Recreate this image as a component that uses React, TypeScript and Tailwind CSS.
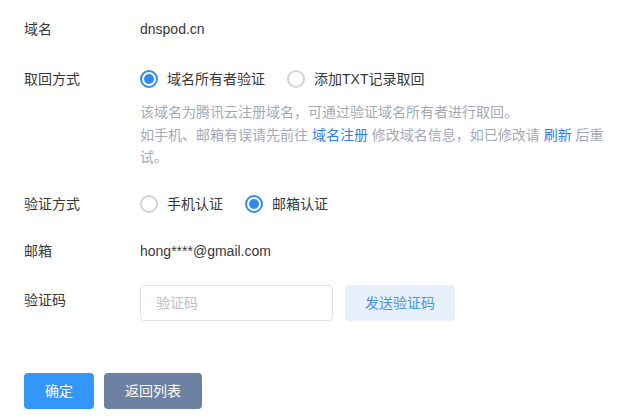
import { useState } from "react";

function Radio({ checked, label, onClick }: { checked: boolean; label: string; onClick: () => void }) {
  return (
    <button type="button" onClick={onClick} className="flex items-center mr-[22px] cursor-pointer">
      <span
        className={`w-[18px] h-[18px] rounded-full border-2 flex items-center justify-center ${
          checked ? "border-[#2f8af5]" : "border-[#d0d4db]"
        }`}
      >
        {checked && <span className="w-[10px] h-[10px] rounded-full bg-[#2f8af5]" />}
      </span>
      <span className="ml-[9px] text-[#383838]">{label}</span>
    </button>
  );
}

export default function App() {
  const [recover, setRecover] = useState("owner");
  const [verify, setVerify] = useState("email");

  return (
    <div
      className="w-[631px] h-[418px] bg-white pl-[24px] pt-[18px] text-[14px] leading-[22px] text-[#383838]"
      style={{ fontFamily: '"Liberation Sans", "Noto Sans CJK SC", sans-serif' }}
    >
      <div className="flex">
        <div className="w-[116px] shrink-0">域名</div>
        <div>dnspod.cn</div>
      </div>

      <div className="flex mt-[28px]">
        <div className="w-[116px] shrink-0">取回方式</div>
        <div className="w-[471px]">
          <div className="flex">
            <Radio checked={recover === "owner"} label="域名所有者验证" onClick={() => setRecover("owner")} />
            <Radio checked={recover === "txt"} label="添加TXT记录取回" onClick={() => setRecover("txt")} />
          </div>
          <p className="mt-[11px] text-[#a3a9b5] leading-[22.5px]">
            该域名为腾讯云注册域名，可通过验证域名所有者进行取回。
            <br />
            如手机、邮箱有误请先前往 <a className="text-[#2d7ff9]">域名注册</a> 修改域名信息，如已修改请{" "}
            <a className="text-[#2d7ff9]">刷新</a> 后重试。
          </p>
        </div>
      </div>

      <div className="flex mt-[24px]">
        <div className="w-[116px] shrink-0">验证方式</div>
        <div className="flex">
          <Radio checked={verify === "phone"} label="手机认证" onClick={() => setVerify("phone")} />
          <Radio checked={verify === "email"} label="邮箱认证" onClick={() => setVerify("email")} />
        </div>
      </div>

      <div className="flex mt-[25px]">
        <div className="w-[116px] shrink-0">邮箱</div>
        <div>hong****@gmail.com</div>
      </div>

      <div className="flex mt-[23px]">
        <div className="w-[116px] shrink-0 pt-[4px]">验证码</div>
        <input
          placeholder="验证码"
          className="w-[193px] h-[36px] border border-[#dcdfe6] rounded-[4px] px-[15px] outline-none placeholder:text-[#b9bfc9]"
        />
        <button className="ml-[12px] w-[110px] h-[36px] rounded-[4px] bg-[#e7f1fd] text-[#4793ec]">发送验证码</button>
      </div>

      <div className="flex mt-[52px] gap-[10px]">
        <button className="w-[70px] h-[36px] rounded-[4px] bg-[#3596fa] text-white">确定</button>
        <button className="w-[98px] h-[36px] rounded-[4px] bg-[#6c80a1] text-white">返回列表</button>
      </div>
    </div>
  );
}
